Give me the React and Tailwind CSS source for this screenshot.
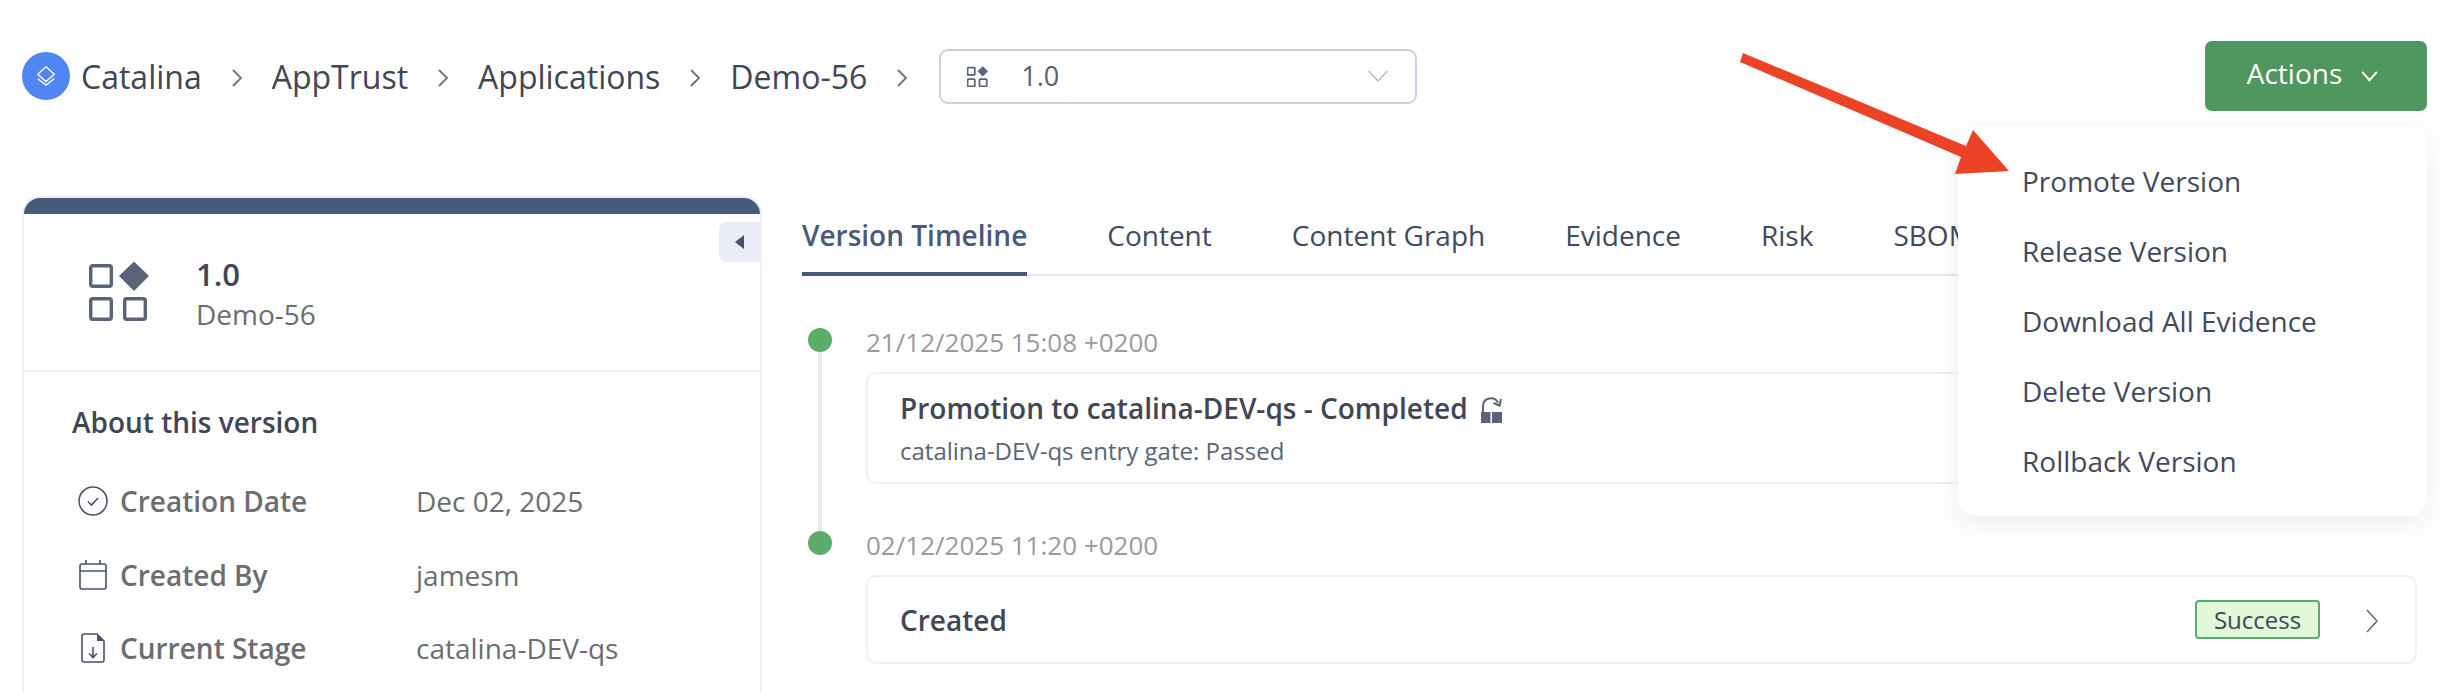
const TABS = ["Version Timeline", "Content", "Content Graph", "Evidence", "Risk", "SBOM"];
const MENU_ITEMS = [
  "Promote Version",
  "Release Version",
  "Download All Evidence",
  "Delete Version",
  "Rollback Version",
];
const CRUMBS = ["Catalina", "AppTrust", "Applications", "Demo-56"];

function Chevron() {
  return (
    <svg viewBox="0 0 12 20" className="w-[12px] h-[20px] mx-[29px] mt-[4px] shrink-0" fill="none" stroke="#6b7280" strokeWidth="1.8">
      <path d="M2 2l8 8-8 8" />
    </svg>
  );
}

function AppIcon({ className, stroke = 3.4 }) {
  return (
    <svg viewBox="0 0 60 60" className={className} fill="none" stroke="#5a6478" strokeWidth={stroke}>
      <rect x="1.7" y="4.7" width="20.6" height="20.6" rx="2" />
      <rect x="1.7" y="37.7" width="20.6" height="20.6" rx="2" />
      <rect x="35.7" y="37.7" width="20.6" height="20.6" rx="2" />
      <path d="M45 0.5L60 15 45 30 30 15z" fill="#5a6478" stroke="none" />
    </svg>
  );
}

function CheckCircle() {
  return (
    <svg viewBox="0 0 30 30" className="w-[30px] h-[30px]" fill="none" stroke="#47526a" strokeWidth="1.6">
      <circle cx="15" cy="15" r="14" />
      <path d="M10 15.5l3.5 3.5 6.5-7" />
    </svg>
  );
}

function CalendarIcon() {
  return (
    <svg viewBox="0 0 28 30" className="w-[28px] h-[30px]" fill="none" stroke="#47526a" strokeWidth="1.6">
      <rect x="1" y="4" width="26" height="25" rx="2" />
      <path d="M1 11h26M7 0v4M21 0v4" />
    </svg>
  );
}

function FileIcon() {
  return (
    <svg viewBox="0 0 24 30" className="w-[24px] h-[30px]" fill="none" stroke="#47526a" strokeWidth="1.6">
      <path d="M3 1h13l7 7v19a2 2 0 0 1-2 2H3a2 2 0 0 1-2-2V3a2 2 0 0 1 2-2z" />
      <path d="M16 1l7 7h-7z" fill="#47526a" stroke="none" />
      <path d="M12 14v10M8 20.5l4 4 4-4" />
    </svg>
  );
}

function LockIcon() {
  return (
    <svg viewBox="0 0 21 27" className="w-[21px] h-[27px] ml-[13px] mt-[3px]" fill="none">
      <path d="M0 16h9.500v11H0zM11 16h10v11H11z" fill="#5a6478" />
      <path d="M2 16v-6a8 8 0 0 1 15-3.500" stroke="#5a6478" strokeWidth="2" />
      <path d="M20 3l-1.500 6.500-6-2.500" stroke="#5a6478" strokeWidth="2" />
    </svg>
  );
}

function InfoRow({ icon, label, value }) {
  return (
    <div className="flex items-center h-[40px]">
      <div className="w-[48px] flex justify-center pr-[6px]">{icon}</div>
      <div className="w-[296px] text-[28px] font-semibold text-[#6b6d70]">{label}</div>
      <div className="text-[28px] text-[#6b6d70]">{value}</div>
    </div>
  );
}

function TimelineRow({ date, last, children }) {
  return (
    <div className={`flex ${last ? "" : "pb-[47px]"} relative`}>
      <div className="ml-[6px] mr-[34px] w-[24px] shrink-0 relative flex justify-center">
        <div className="w-[24px] h-[24px] rounded-full bg-[#5eac6b]" />
        {!last && <div className="absolute top-[24px] bottom-[-47px] w-[4px] bg-[#e8e9f0]" />}
      </div>
      <div className="flex-1">
        <div className="h-[30px] leading-[28px] text-[26px] text-[#9a9a9d]">{date}</div>
        {children}
      </div>
    </div>
  );
}

export default function App() {
  return (
    <div className="relative w-[2454px] h-[692px] overflow-hidden bg-white font-['Open_Sans',sans-serif]">
      {/* top bar */}
      <div className="flex items-center justify-between pl-[22px] pr-[27px] pt-[41px] h-[111px]">
        <div className="flex items-center">
          <div className="w-[48px] h-[48px] rounded-full bg-[#4f86f3] flex items-center justify-center mr-[11px]">
            <svg viewBox="0 0 24 24" className="w-[22px] h-[22px]" fill="none" stroke="white" strokeWidth="1.5">
              <path d="M12 2l9 8-9 8-9-8z" />
              <path d="M3 15l9 7 9-7" />
            </svg>
          </div>
          {CRUMBS.map((crumb) => (
            <div key={crumb} className="flex items-center">
              <span className="text-[32px] text-[#3f4654] mt-[2px]">{crumb}</span>
              <Chevron />
            </div>
          ))}
          <div className="ml-[2px] w-[478px] h-[55px] border-2 border-[#ccd0e3] rounded-[9px] flex items-center pl-[26px] pr-[27px]">
            <AppIcon className="w-[21px] h-[21px]" stroke={5} />
            <span className="ml-[33px] text-[27px] text-[#555e70] flex-1">1.0</span>
            <svg viewBox="0 0 20 12" className="w-[20px] h-[12px]" fill="none" stroke="#b5b8c0" strokeWidth="1.4">
              <path d="M0.500 1l9.500 10 9.500-10" />
            </svg>
          </div>
        </div>
        <button className="w-[222px] h-[70px] pb-[6px] pr-[6px] rounded-[7px] bg-[#50965f] flex items-center justify-center text-[28px] font-medium text-white">
          Actions
          <svg viewBox="0 0 20 12" className="w-[19px] h-[11px] ml-[18px] mt-[7px]" fill="none" stroke="white" strokeWidth="2.2">
            <path d="M2 1l8 9 8-9" />
          </svg>
        </button>
      </div>

      <div className="flex pl-[22px] pr-[37px] mt-[85px]">
        {/* version card */}
        <div className="relative w-[740px] h-[500px] shrink-0 rounded-t-[18px] border-x-2 border-t-2 border-[#eef0f6] overflow-hidden">
          <div className="h-[16px] bg-[#475a7b]" />
          <div className="absolute right-0 top-[24px] w-[41px] h-[40px] rounded-l-[7px] bg-[#eaedf5] flex items-center justify-center">
            <div className="w-0 h-0 border-y-[7px] border-y-transparent border-r-[9px] border-r-[#47526a]" />
          </div>
          <div className="flex pl-[65px] pt-[40px] pb-[36px] border-b-2 border-[#eef0f6]">
            <AppIcon className="w-[60px] h-[60px] mt-[7px]" />
            <div className="ml-[47px]">
              <div className="h-[40px] leading-[40px] text-[31px] font-semibold text-[#3f4654]">1.0</div>
              <div className="h-[40px] leading-[40px] text-[28px] text-[#6b6d70]">Demo-56</div>
            </div>
          </div>
          <div className="pl-[48px] pt-[30px]">
            <div className="h-[40px] leading-[40px] text-[28px] font-semibold text-[#3f4654]">About this version</div>
            <div className="flex flex-col gap-[33.500px] mt-[39px]">
              <InfoRow icon={<CheckCircle />} label="Creation Date" value="Dec 02, 2025" />
              <InfoRow icon={<CalendarIcon />} label="Created By" value="jamesm" />
              <InfoRow icon={<FileIcon />} label="Current Stage" value="catalina-DEV-qs" />
            </div>
          </div>
        </div>

        {/* timeline pane */}
        <div className="flex-1 ml-[40px]">
          <div className="flex gap-[80px] border-b-2 border-[#e8e9f0] text-[28px] text-[#414a5c]">
            {TABS.map((tab, i) => (
              <div
                key={tab}
                className={
                  i === 0
                    ? "pt-[20px] pb-[18px] -mb-[2px] border-b-4 border-[#475a7b] font-semibold text-[#475a7b] leading-[38px]"
                    : "pt-[20px] pb-[18px] -mb-[2px] border-b-4 border-transparent leading-[38px]"
                }
              >
                {tab}
              </div>
            ))}
          </div>
          <div className="mt-[52px]">
            <TimelineRow date="21/12/2025 15:08 +0200">
              <div className="mt-[14px] h-[112px] rounded-[10px] border-2 border-[#eef0f6] pl-[32px] pt-[15px]">
                <div className="flex items-center h-[38px] text-[28px] font-semibold text-[#3f4654]">
                  Promotion to catalina-DEV-qs - Completed
                  <LockIcon />
                </div>
                <div className="mt-[8px] h-[32px] leading-[32px] text-[24px] text-[#5a6478]">
                  catalina-DEV-qs entry gate: Passed
                </div>
              </div>
            </TimelineRow>
            <TimelineRow date="02/12/2025 11:20 +0200" last>
              <div className="mt-[14px] h-[89px] rounded-[10px] border-2 border-[#eef0f6] pl-[32px] pr-[37px] flex items-center justify-between">
                <div className="text-[28px] font-semibold text-[#3f4654]">Created</div>
                <div className="flex items-center">
                  <div className="w-[125px] h-[39px] rounded-[4px] border-2 border-[#5cab6a] bg-[#e1f8d9] flex items-center justify-center text-[24px] font-medium text-[#3f4654]">
                    Success
                  </div>
                  <svg viewBox="0 0 12 24" className="w-[12px] h-[24px] ml-[46px] mt-[3px]" fill="none" stroke="#5a6478" strokeWidth="1.4">
                    <path d="M1 1l10 11-10 11" />
                  </svg>
                </div>
              </div>
            </TimelineRow>
          </div>
        </div>
      </div>

      {/* actions dropdown */}
      <div className="absolute right-[27px] top-[126px] w-[469px] h-[390px] pt-[20px] pl-[64px] rounded-[18px] bg-white shadow-[0_8px_30px_rgba(0,0,0,0.08)]">
        {MENU_ITEMS.map((item) => (
          <div key={item} className="h-[70px] leading-[70px] text-[28px] text-[#414a5c]">
            {item}
          </div>
        ))}
      </div>

      {/* red annotation arrow */}
      <svg viewBox="1730 45 290 140" className="absolute left-[1730px] top-[45px] w-[290px] h-[140px]">
        <polygon points="1743,53 1966,146 1973,130 2009,171 1955,174 1961,157 1740,62" fill="#ec4225" />
      </svg>
    </div>
  );
}
